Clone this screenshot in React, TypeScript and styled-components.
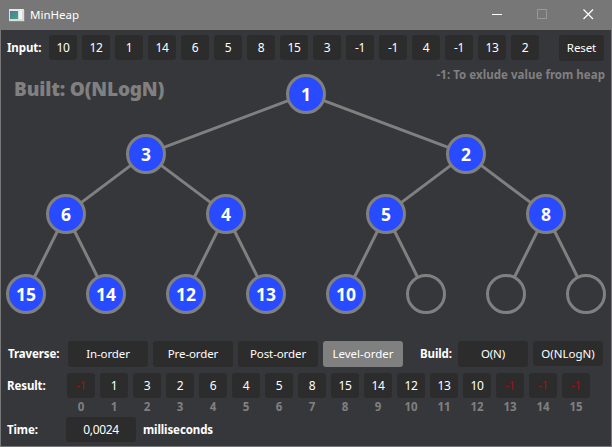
import React from 'react';
import styled, { createGlobalStyle } from 'styled-components';

const GlobalStyle = createGlobalStyle`
  * { box-sizing: border-box; }
  body { margin: 0; overflow: hidden; background: #36373b; }
`;

const Window = styled.main`
  width: 612px;
  height: 447px;
  display: flex;
  flex-direction: column;
  border: solid #787878;
  border-width: 0 1px 1px;
  background: #36373b;
  color: #fff;
  font: 11.5px/16px 'Noto Sans', 'Open Sans', sans-serif;
  white-space: nowrap;
`;

const TitleBar = styled.header`
  height: 30px;
  flex: none;
  display: flex;
  align-items: center;
  padding-left: 8px;
  background: #777;
`;

const Title = styled.h1`
  flex: 1;
  margin: 0 0 0 5px;
  font-size: 11.5px;
  font-weight: 400;
`;

const Caption = styled.div`
  display: flex;
  svg { display: block; }
`;

const InputRow = styled.section`
  display: flex;
  align-items: flex-start;
  height: 26px;
  margin-top: 5px;
  padding-left: 6px;
`;

const Label = styled.span<{ $width?: number; $spacing?: number }>`
  flex: none;
  width: ${p => (p.$width ? `${p.$width}px` : 'auto')};
  line-height: 26px;
  font-weight: 700;
  letter-spacing: ${p => p.$spacing ?? -0.1}px;
`;

const Cells = styled.div`
  display: flex;
  gap: 5px;
`;

const Cell = styled.div<{ $excluded?: boolean; $width?: number }>`
  width: ${p => p.$width ?? 28}px;
  height: 25px;
  border-radius: 3px;
  background: #2c2c2c;
  color: ${p => (p.$excluded ? '#951717' : '#fff')};
  font-size: 12px;
  letter-spacing: -0.35px;
  text-align: center;
  line-height: 26px;
`;

const Button = styled.button<{ $width: number; $height?: number; $active?: boolean; $spacing?: number }>`
  width: ${p => p.$width}px;
  height: ${p => p.$height ?? 26}px;
  flex: none;
  padding: 0;
  border: 0;
  border-radius: 3px;
  background: ${p => (p.$active ? '#808080' : '#2c2c2c')};
  color: #fff;
  font: inherit;
  line-height: 26px;
  letter-spacing: ${p => p.$spacing ?? -0.1}px;
`;

const ResetSlot = styled.div`
  display: flex;
  margin-left: 20px;
`;

const HeapView = styled.section`
  display: grid;
  height: 280px;
  flex: none;
  > * { grid-area: 1 / 1; }
`;

const Notes = styled.div`
  display: flex;
  justify-content: space-between;
  padding: 0 6px 0 13px;
  color: #808080;
  font-weight: 700;
`;

const Built = styled.strong`
  margin-top: 15px;
  font-size: 19px;
  line-height: 26px;
  letter-spacing: -0.18px;
`;

const Hint = styled.span`
  margin-top: 6px;
  letter-spacing: 0.04px;
`;

const Tree = styled.svg`
  display: block;
  text {
    font-size: 17.5px;
    font-weight: 700;
    text-anchor: middle;
    fill: #fff;
  }
`;

const Actions = styled.section`
  display: flex;
  gap: 5px;
  padding-left: 7px;
`;

const BuildLabel = styled(Label)`
  margin-left: 12px;
  width: 33px;
`;

const ResultRow = styled.section`
  display: flex;
  margin-top: 6px;
  padding-left: 6px;
`;

const Column = styled.div`
  width: 28px;
  text-align: center;
`;

const Index = styled.div`
  line-height: 17px;
  color: #808080;
  font-weight: 700;
`;

const TimeRow = styled.section`
  display: flex;
  margin-top: 2px;
  padding-left: 6px;
`;

const Unit = styled(Label)`
  margin-left: 7px;
`;

const input = [10, 12, 1, 14, 6, 5, 8, 15, 3, -1, -1, 4, -1, 13, 2];
const result = [-1, 1, 3, 2, 6, 4, 5, 8, 15, 14, 12, 13, 10, -1, -1, -1];

const levelY = [33, 93, 153, 233];
const nodes = result.slice(1).map((value, i) => {
  const level = Math.floor(Math.log2(i + 1));
  const column = i + 1 - 2 ** level;
  const step = 640 / 2 ** level;
  return { value, x: -15 + step * (column + 0.5), y: levelY[level] };
});

const HeapTree = () => (
  <Tree width="610" height="280">
    {nodes.slice(1).map((node, i) => {
      const parent = nodes[Math.floor(i / 2)];
      const dx = node.x - parent.x;
      const dy = node.y - parent.y;
      const length = Math.hypot(dx, dy);
      const ox = (dx / length) * 19;
      const oy = (dy / length) * 19;
      return (
        <line key={i} x1={parent.x + ox} y1={parent.y + oy} x2={node.x - ox} y2={node.y - oy} stroke="#808080" strokeWidth="3" />
      );
    })}
    {nodes.map((node, i) => (
      <g key={i}>
        <circle cx={node.x} cy={node.y} r="18.5" fill={node.value < 0 ? 'none' : '#294bff'} stroke="#808080" strokeWidth="3" />
        {node.value >= 0 && <text x={node.x} y={node.y + 7}>{node.value}</text>}
      </g>
    ))}
  </Tree>
);

const AppIcon = () => (
  <svg width="16" height="14" viewBox="0 0 16 14">
    <defs>
      <linearGradient id="screen" x1="0" y1="0" x2="1" y2="1">
        <stop offset="0" stopColor="#477b9d" />
        <stop offset="1" stopColor="#4da27c" />
      </linearGradient>
    </defs>
    <path d="M0 1h15v12H0z" fill="#d9dddd" />
    <path d="M1 3h8v8H1z" fill="url(#screen)" />
    <path d="M10 3h3v8h-3z" fill="#f3f3f3" />
    <path d="M1 2h13" stroke="#f4f4f4" />
    <path d="M0 13.5h15.5V2" fill="none" stroke="#999" strokeWidth=".6" />
  </svg>
);

export default function App() {
  return (
    <>
      <GlobalStyle />
      <Window>
        <TitleBar>
          <AppIcon />
          <Title>MinHeap</Title>
          <Caption>
            <svg width="45" height="30"><path d="M18 14.5h10" stroke="#fff" /></svg>
            <svg width="46" height="30"><path d="M18.5 9.5h9v9h-9z" fill="none" stroke="#999" /></svg>
            <svg width="46" height="30"><path d="M18.5 9.5l9.5 9.5M28 9.5L18.5 19" fill="none" stroke="#fff" strokeWidth="1.2" /></svg>
          </Caption>
        </TitleBar>
        <InputRow>
          <Label $width={42}>Input:</Label>
          <Cells>{input.map((value, i) => <Cell key={i}>{value}</Cell>)}</Cells>
          <ResetSlot><Button $width={45}>Reset</Button></ResetSlot>
        </InputRow>
        <HeapView>
          <HeapTree />
          <Notes>
            <Built>Built: O(NLogN)</Built>
            <Hint>-1: To exlude value from heap</Hint>
          </Notes>
        </HeapView>
        <Actions>
          <Label $width={55}>Traverse:</Label>
          <Button $width={80}>In-order</Button>
          <Button $width={80}>Pre-order</Button>
          <Button $width={80}>Post-order</Button>
          <Button $width={80} $active $spacing={0}>Level-order</Button>
          <BuildLabel>Build:</BuildLabel>
          <Button $width={70}>O(N)</Button>
          <Button $width={70} $height={25} $spacing={0}>O(NLogN)</Button>
        </Actions>
        <ResultRow>
          <Label $width={60}>Result:</Label>
          <Cells>
            {result.map((value, i) => (
              <Column key={i}>
                <Cell $excluded={value < 0}>{value}</Cell>
                <Index>{i}</Index>
              </Column>
            ))}
          </Cells>
        </ResultRow>
        <TimeRow>
          <Label $width={59}>Time:</Label>
          <Cell $width={70}>0,0024</Cell>
          <Unit>milliseconds</Unit>
        </TimeRow>
      </Window>
    </>
  );
}
